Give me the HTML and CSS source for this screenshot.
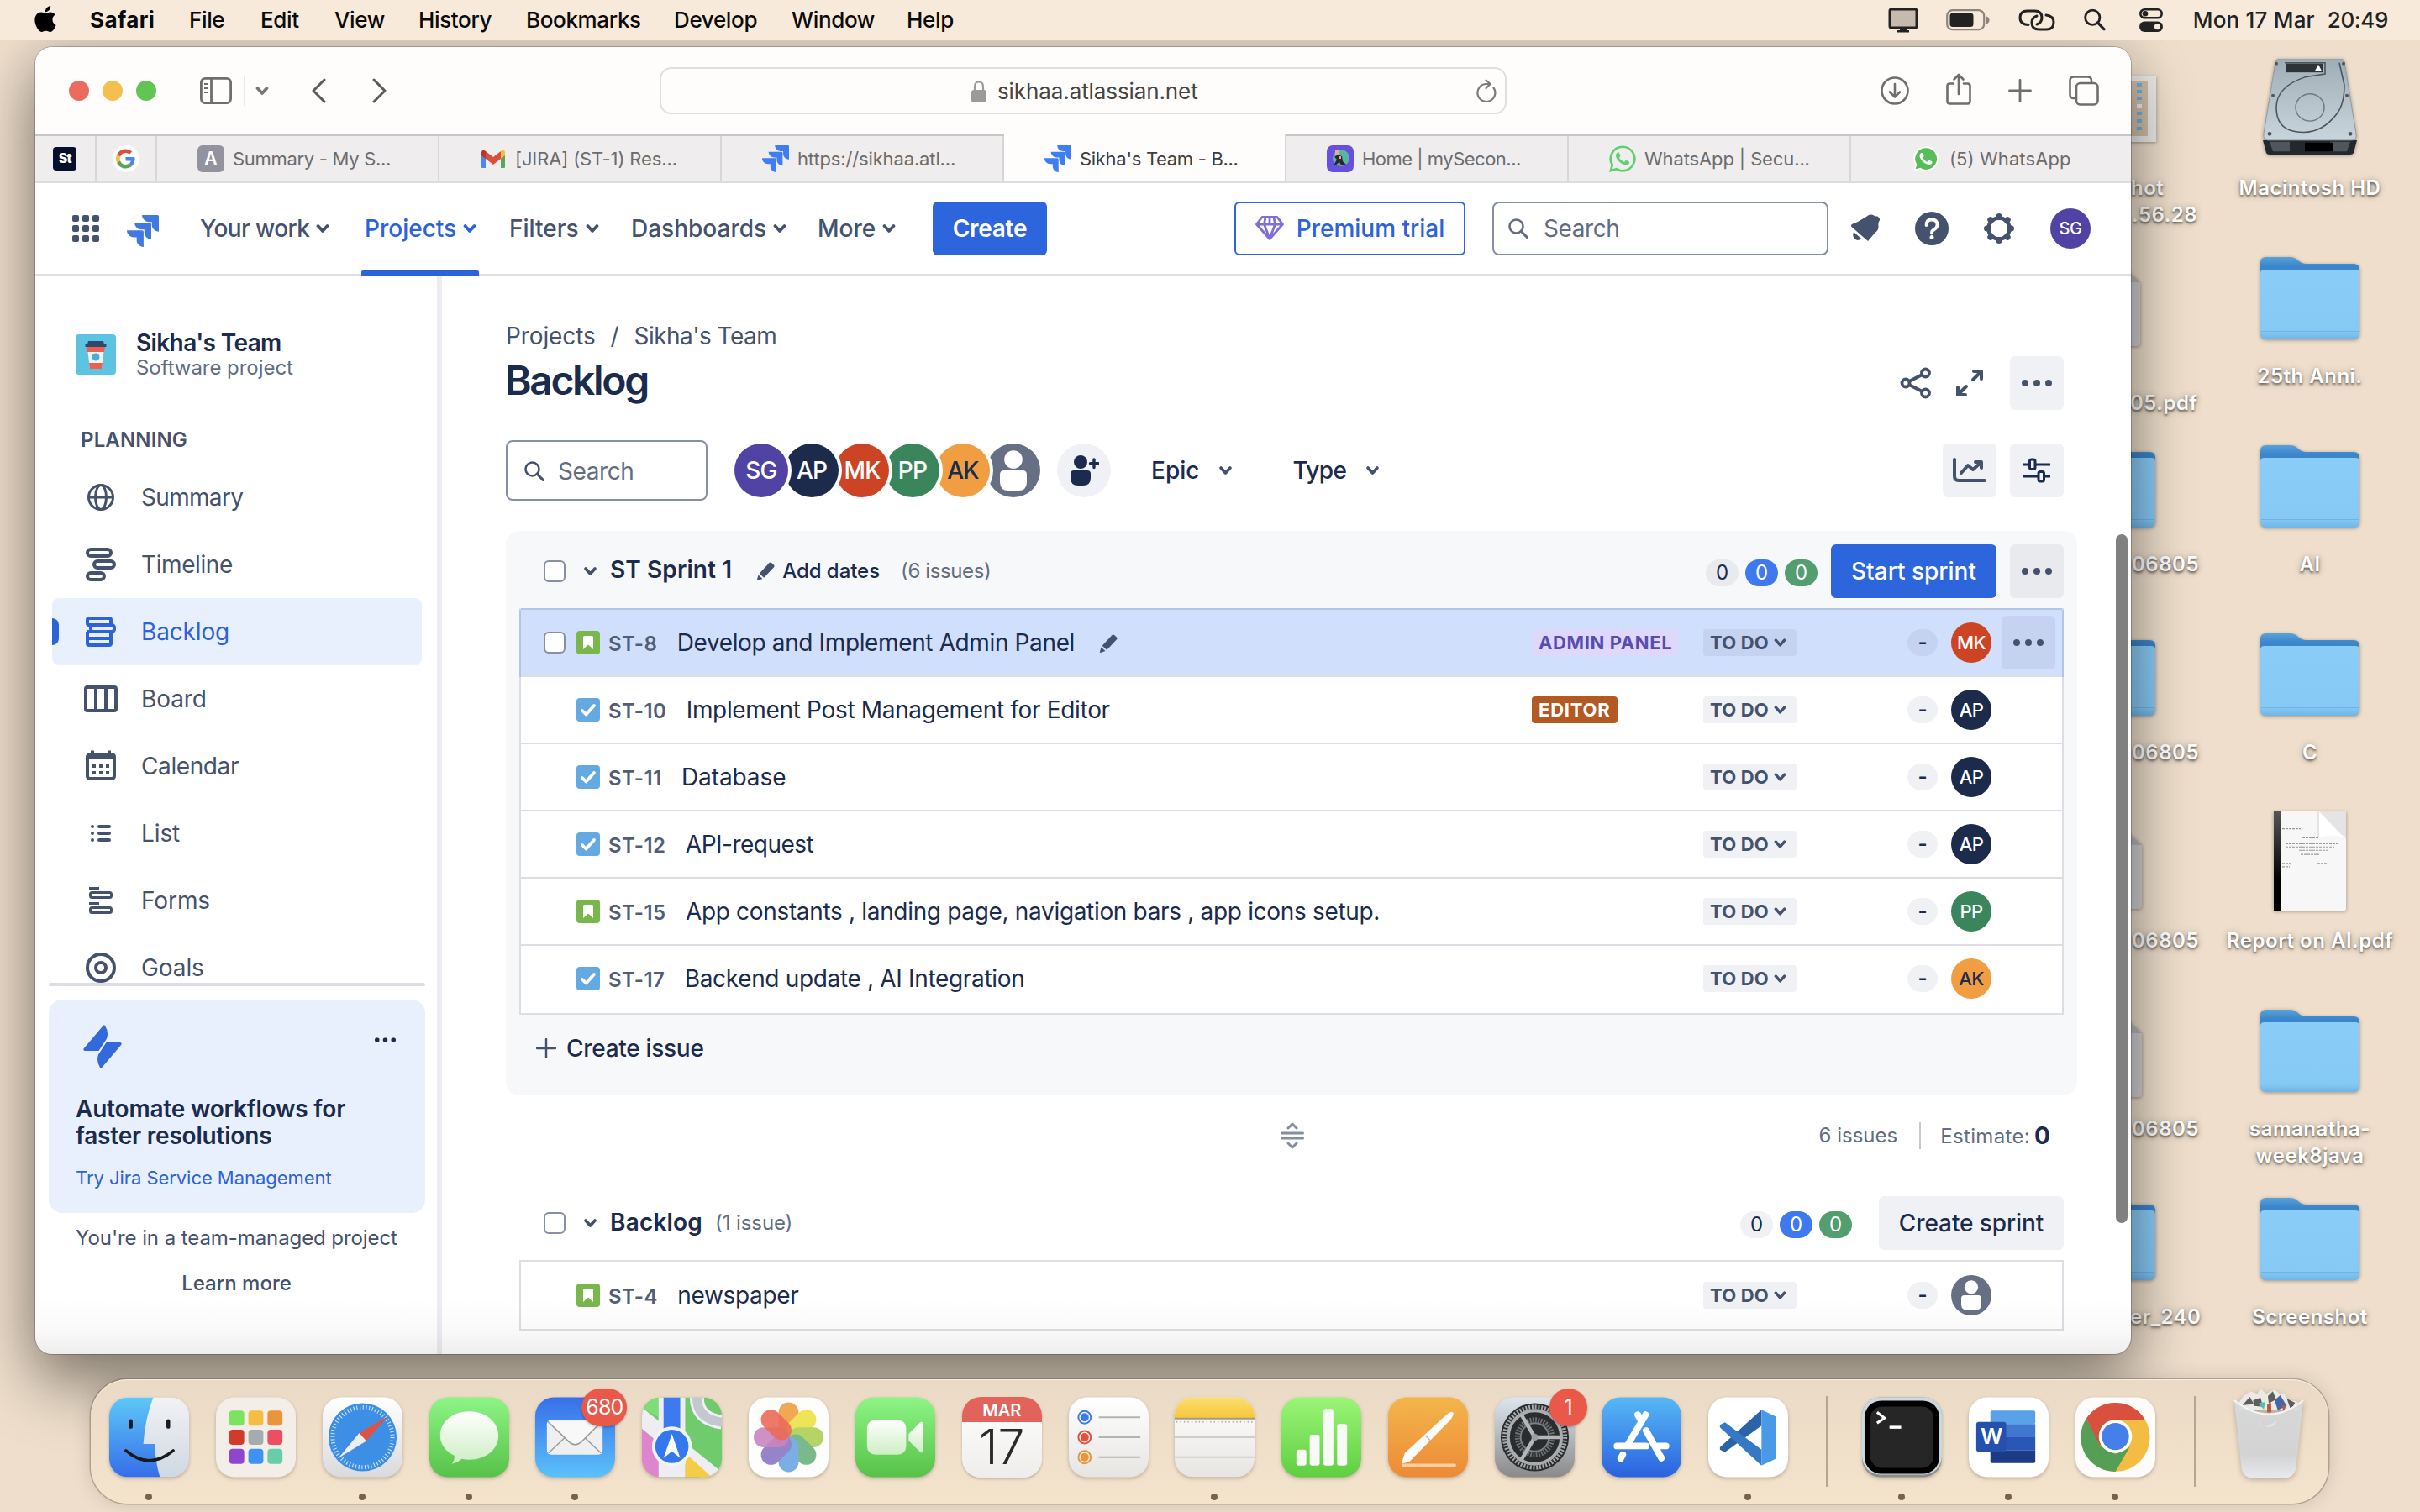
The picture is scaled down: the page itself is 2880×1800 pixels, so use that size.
FILE: index.html
```html
<!DOCTYPE html>
<html lang="en">
<head>
<meta charset="utf-8">
<title>Sikha's Team - Backlog</title>
<link rel="stylesheet" href="styles.css">
</head>
<body>
<svg class="defs" width="0" height="0" aria-hidden="true">
  <defs>
    <linearGradient id="gBlue" x1="0" y1="0" x2="0" y2="1"><stop offset="0" stop-color="#57b8f5"/><stop offset="1" stop-color="#2a62de"/></linearGradient>
    <linearGradient id="gFinder" x1="0" y1="0" x2="0" y2="1"><stop offset="0" stop-color="#5ec8f8"/><stop offset="1" stop-color="#356ee9"/></linearGradient>
    <linearGradient id="gFinderR" x1="0" y1="0" x2="0" y2="1"><stop offset="0" stop-color="#f1f2f5"/><stop offset="1" stop-color="#cfd8e3"/></linearGradient>
    <linearGradient id="gGreen" x1="0" y1="0" x2="0" y2="1"><stop offset="0" stop-color="#8df585"/><stop offset="1" stop-color="#57c148"/></linearGradient>
    <linearGradient id="gNum" x1="0" y1="0" x2="0" y2="1"><stop offset="0" stop-color="#9bf577"/><stop offset="1" stop-color="#5fcf41"/></linearGradient>
    <linearGradient id="gMail" x1="0" y1="0" x2="0" y2="1"><stop offset="0" stop-color="#3670ea"/><stop offset="1" stop-color="#5bc1f9"/></linearGradient>
    <linearGradient id="gOrange" x1="0" y1="0" x2="0" y2="1"><stop offset="0" stop-color="#f3b64b"/><stop offset="1" stop-color="#ed8a37"/></linearGradient>
    <linearGradient id="gGrey" x1="0" y1="0" x2="0" y2="1"><stop offset="0" stop-color="#dbe6ee"/><stop offset="1" stop-color="#8b8a8a"/></linearGradient>
    <linearGradient id="gWhite" x1="0" y1="0" x2="0" y2="1"><stop offset="0" stop-color="#ffffff"/><stop offset="1" stop-color="#d9dadb"/></linearGradient>
    <linearGradient id="gPaper" x1="0" y1="0" x2="0" y2="1"><stop offset="0" stop-color="#ffffff"/><stop offset="1" stop-color="#e6e5e2"/></linearGradient>
    <linearGradient id="gBubble" x1="0" y1="0" x2="0" y2="1"><stop offset="0" stop-color="#ffffff"/><stop offset="1" stop-color="#cdeec4"/></linearGradient>
    <linearGradient id="gYellow" x1="0" y1="0" x2="0" y2="1"><stop offset="0" stop-color="#fbdf6e"/><stop offset="1" stop-color="#f6c63c"/></linearGradient>
    <linearGradient id="gFolder" x1="0" y1="0" x2="0" y2="1"><stop offset="0" stop-color="#8acdf8"/><stop offset=".88" stop-color="#86c9f5"/><stop offset="1" stop-color="#6fb5e6"/></linearGradient>
    <linearGradient id="gFolderBack" x1="0" y1="0" x2="0" y2="1"><stop offset="0" stop-color="#59a3d8"/><stop offset=".2" stop-color="#3a85cc"/></linearGradient>
    <linearGradient id="gDisk" x1="0" y1="0" x2="0" y2="1"><stop offset="0" stop-color="#9fadb6"/><stop offset="1" stop-color="#c9d5dc"/></linearGradient>
    <linearGradient id="gTrash" x1="0" y1="0" x2="0" y2="1"><stop offset="0" stop-color="#d9dbdd"/><stop offset=".7" stop-color="#d4d5d7"/><stop offset="1" stop-color="#e9edf2"/></linearGradient>
    <linearGradient id="gSpine" x1="0" y1="0" x2="0" y2="1"><stop offset="0" stop-color="#555"/><stop offset=".7" stop-color="#000"/></linearGradient>
    <clipPath id="squircle"><rect width="96" height="96" rx="22"/></clipPath>

    <symbol id="jira" viewBox="2 2 20 20"><path d="M11.53 2c0 2.4 1.97 4.35 4.35 4.35h1.78v1.7c0 2.4 1.94 4.34 4.34 4.35V2.84a.84.84 0 00-.84-.84h-9.63zM6.77 6.8a4.362 4.362 0 004.34 4.34h1.8v1.72a4.362 4.362 0 004.34 4.34V7.63a.841.841 0 00-.83-.83H6.77zM2 11.6c0 2.4 1.95 4.34 4.35 4.34h1.78v1.72c.01 2.39 1.95 4.33 4.34 4.34v-9.57a.84.84 0 00-.84-.83H2z"/></symbol>
    <symbol id="chev" viewBox="0 0 16 12"><path d="M2.5 3l5.5 6 5.5-6" fill="none" stroke="currentColor" stroke-width="3.700" stroke-linecap="round" stroke-linejoin="round"/></symbol>
    <symbol id="search" viewBox="0 0 24 24"><circle cx="9.5" cy="9.5" r="8" fill="none" stroke="currentColor" stroke-width="2.6"/><path d="M15.2 15.2l7 7.2" stroke="currentColor" stroke-width="3" stroke-linecap="round"/></symbol>
    <symbol id="dots" viewBox="0 0 36 8"><circle cx="4" cy="4" r="4"/><circle cx="18" cy="4" r="4"/><circle cx="32" cy="4" r="4"/></symbol>
    <symbol id="pencil" viewBox="1 1 22 22"><path d="M4.200 14.800L15.800 2.2q1.300-1.300 2.800-.1l2.800 2.400q1.300 1.300.1 2.700L9.700 19.800z"/><path d="M3 16.600l5 4.500-5.800 1.800q-1 0-.8-1z"/></symbol>
    <symbol id="story" viewBox="0 0 28 28"><rect width="28" height="28" rx="4" fill="#79b64c"/><path d="M8 7.500q0-1.500 1.500-1.500h9q1.500 0 1.500 1.500V22l-6-5.500L8 22z" fill="#fff"/></symbol>
    <symbol id="task" viewBox="0 0 28 28"><rect width="28" height="28" rx="4" fill="#65a9e2"/><path d="M7 15l4.500 4.500L21 9" fill="none" stroke="#fff" stroke-width="3.800" stroke-linecap="round" stroke-linejoin="round"/></symbol>
    <symbol id="person" viewBox="0 0 64 64"><circle cx="32" cy="32" r="32" fill="#666f84"/><circle cx="32" cy="19" r="10.800" fill="#fff"/><path d="M16 37q0-5 5-5h22q5 0 5 5v9q0 10-10 10H26q-10 0-10-10z" fill="#fff"/></symbol>
    <symbol id="phone" viewBox="0 0 24 24"><path d="M17.472 14.382c-.297-.149-1.758-.867-2.03-.967-.273-.099-.471-.148-.67.15-.197.297-.767.966-.94 1.164-.173.199-.347.223-.644.075-.297-.15-1.255-.463-2.39-1.475-.883-.788-1.480-1.761-1.653-2.059-.173-.297-.018-.458.130-.606.134-.133.298-.347.446-.520.149-.174.198-.298.298-.497.099-.198.050-.371-.025-.520-.075-.149-.669-1.612-.916-2.207-.242-.579-.487-.500-.669-.510-.173-.008-.371-.010-.570-.010-.198 0-.520.074-.792.372-.272.297-1.040 1.016-1.040 2.479 0 1.462 1.065 2.875 1.213 3.074.149.198 2.096 3.200 5.077 4.487.709.306 1.262.489 1.694.625.712.227 1.360.195 1.871.118.571-.085 1.758-.719 2.006-1.413.248-.694.248-1.289.173-1.413-.074-.124-.272-.198-.570-.347"/></symbol>
    <symbol id="folder" viewBox="0 0 120 100">
      <path d="M1 8q0-7 7-7h28q6 0 10 4t10 4h56q7 0 7 7v40H1z" fill="url(#gFolderBack)"/>
      <path d="M1 20q0-4 5-4h108q5 0 5 4v72q0 7-7 7H8q-7 0-7-7z" fill="url(#gFolder)"/>
      <path d="M2 89.500h116" stroke="#6fb3e3" stroke-width="1"/>
    </symbol>
    <symbol id="doc" viewBox="0 0 84 96"><path d="M4 0h58l22 20v72q0 4-4 4H4q-4 0-4-4V4q0-4 4-4z" fill="#d2d1d1"/><path d="M62 0l22 20H62z" fill="#b9b8b8"/></symbol>
  </defs>
</svg>

<header class="menubar">
  <nav class="menus">
    <svg class="apple" viewBox="2 0 20 24"><path d="M12.152 6.896c-.948 0-2.415-1.078-3.960-1.040-2.040.027-3.910 1.183-4.961 3.014-2.117 3.675-.546 9.103 1.519 12.090 1.013 1.454 2.208 3.090 3.792 3.039 1.520-.065 2.090-.987 3.935-.987 1.831 0 2.350.987 3.960.948 1.637-.026 2.676-1.480 3.676-2.948 1.156-1.688 1.636-3.325 1.662-3.415-.039-.013-3.182-1.221-3.220-4.857-.026-3.040 2.480-4.494 2.597-4.559-1.429-2.090-3.623-2.324-4.390-2.376-2-.156-3.675 1.090-4.610 1.090zM15.530 3.830c.843-1.012 1.400-2.427 1.245-3.830-1.207.052-2.662.805-3.532 1.818-.780.896-1.454 2.338-1.273 3.714 1.338.104 2.715-.688 3.559-1.701"/></svg>
    <b>Safari</b><span>File</span><span>Edit</span><span>View</span><span>History</span><span>Bookmarks</span><span>Develop</span><span>Window</span><span>Help</span>
  </nav>
  <div class="status">
    <svg width="36" height="30" viewBox="0 0 36 30"><rect x="2" y="2" width="32" height="22" rx="2" fill="#c5baad" stroke="#222" stroke-width="3"/><path d="M14 24h8v3h3v2.500H11V27h3z" fill="#222"/></svg>
    <svg width="52" height="26" viewBox="0 0 52 26"><rect x="1.200" y="1.200" width="44" height="23" rx="6.500" fill="none" stroke="#8d857c" stroke-width="2.200"/><rect x="4.500" y="4.500" width="28" height="16.500" rx="3.500" fill="#222"/><path d="M48 8.500q3.500 1.500 3.500 4.500T48 17.500z" fill="#8d857c"/></svg>
    <svg width="44" height="26" viewBox="0 0 44 26" fill="none" stroke="#222" stroke-width="3" stroke-linecap="round"><path d="M12 18.500q-10-.5-10-8.500 0-8 8.500-8h9Q28 2 28 10q0 6-6 8"/><path d="M33 7q9 1 9 8.500 0 8.500-8.500 8.500h-9Q16 24 16 16q0-6 6-8"/></svg>
    <svg width="26" height="27" viewBox="0 0 24 24" color="#222"><use href="#search"/></svg>
    <svg width="28" height="28" viewBox="0 0 28 28"><rect x="1.300" y="1.300" width="25.400" height="10" rx="5" fill="none" stroke="#222" stroke-width="2.600"/><circle cx="7" cy="6.300" r="3.300" fill="#222"/><rect y="15.500" width="28" height="12.500" rx="6.200" fill="#222"/><circle cx="21.500" cy="21.700" r="3.600" fill="#f7eadb"/></svg>
    <span class="date">Mon 17 Mar</span><span class="time">20:49</span>
  </div>
</header>

<main class="desktop">
  <figure class="item" style="left:2593px;top:70px"><svg width="112" height="114" viewBox="0 0 112 120" preserveAspectRatio="none"><path d="M0 102l4 16q1 2 4 2h96q3 0 4-2l4-16z" fill="#23282c"/><path d="M8 104h24v12H12zM80 104h24l-4 12H80z" fill="#4f575c"/><path d="M15 4q1-4 5-4h72q4 0 5 4l14 90q1 8-5 8H6q-6 0-5-8z" fill="url(#gDisk)" stroke="#8e9ba3"/><path d="M26 5h48v14l-24 4q-34 12-34 38t22 30q30 6 50-22 9-12 9-36l-6-28" fill="none" stroke="#4c555b" stroke-width="1.600"/><rect x="28" y="6" width="44" height="11" fill="#2d3336"/><path d="M66 7l4 8h-8z" fill="#fff"/><circle cx="56" cy="61" r="17" fill="none" stroke="#6f7a81" stroke-width="1.500"/><g fill="#4d565c"><circle cx="16" cy="6" r="2"/><circle cx="96" cy="6" r="2"/><circle cx="12" cy="46" r="2"/><circle cx="100" cy="46" r="2"/><circle cx="8" cy="94" r="2.500"/><circle cx="104" cy="94" r="2.500"/></g><path d="M50 105h34v11H50z" fill="#000"/></svg><figcaption>Macintosh HD</figcaption></figure>
  <figure class="item" style="left:2593px;top:304px"><svg width="120" height="102"><use href="#folder"/></svg><figcaption>25th Anni.</figcaption></figure>
  <figure class="item" style="left:2593px;top:528px"><svg width="120" height="102"><use href="#folder"/></svg><figcaption>AI</figcaption></figure>
  <figure class="item" style="left:2593px;top:752px"><svg width="120" height="102"><use href="#folder"/></svg><figcaption>C</figcaption></figure>
  <figure class="item report" style="left:2593px;top:966px"><svg width="86" height="118" viewBox="0 0 86 120" preserveAspectRatio="none"><rect width="86" height="120" rx="2" fill="#f7f7f7"/><rect width="8" height="120" fill="url(#gSpine)"/><path d="M52 0h34v34q-4-12-34-2z" fill="#e4e4e4"/><path d="M54 0l30 32q-14-6-30 0z" fill="#fff"/><path d="M10 21h22M34 32h20M14 39h64M14 43h58M30 47h36M32 52h22M10 63h11M10 67h9M52 63h11" stroke="#999" stroke-width="1.200" stroke-dasharray="3 1"/></svg><figcaption>Report on AI.pdf</figcaption></figure>
  <figure class="item" style="left:2593px;top:1200px"><svg width="120" height="102"><use href="#folder"/></svg><figcaption>samanatha-<br>week8java</figcaption></figure>
  <figure class="item" style="left:2593px;top:1424px"><svg width="120" height="102"><use href="#folder"/></svg><figcaption>Screenshot</figcaption></figure>

  <figure class="edge" style="left:2446px;top:91px"><svg width="120" height="78" viewBox="0 0 120 78"><rect width="120" height="78" fill="#ecebea"/><rect x="4" y="5" width="106" height="66" fill="#d2bfa9"/><rect x="4" y="5" width="83" height="66" fill="#f2f2f2"/><path d="M97 8h6v4h-6zM97 16h6v4h-6zM97 24h6v4h-6zM97 42h6v4h-6zM97 51h6v4h-6zM97 60h6v4h-6z" fill="#6fb3df"/><path d="M97 33h6v5h-6z" fill="#eee"/></svg></figure>
  <span class="tag" style="left:2536px;top:208px">hot</span>
  <span class="tag" style="left:2537px;top:240px">.56.28</span>
  <figure class="edge" style="left:2463px;top:316px"><svg width="84" height="96"><use href="#doc"/></svg></figure>
  <span class="tag" style="left:2535px;top:464px">05.pdf</span>
  <figure class="edge" style="left:2446px;top:528px"><svg width="120" height="102"><use href="#folder"/></svg></figure>
  <span class="tag" style="left:2537px;top:656px">06805</span>
  <figure class="edge" style="left:2446px;top:752px"><svg width="120" height="102"><use href="#folder"/></svg></figure>
  <span class="tag" style="left:2537px;top:880px">06805</span>
  <figure class="edge" style="left:2465px;top:986px"><svg width="84" height="96"><use href="#doc"/></svg></figure>
  <span class="tag" style="left:2537px;top:1104px">06805</span>
  <figure class="edge" style="left:2465px;top:1210px"><svg width="84" height="96"><use href="#doc"/></svg></figure>
  <span class="tag" style="left:2537px;top:1328px">06805</span>
  <figure class="edge" style="left:2446px;top:1424px"><svg width="120" height="102"><use href="#folder"/></svg></figure>
  <span class="tag" style="left:2535px;top:1552px">er_240</span>

  <section class="window">
    <div class="chrome">
      <div class="lights"><i class="red"></i><i class="amber"></i><i class="green"></i></div>
      <svg class="c-side" width="38" height="32" viewBox="0 0 38 32" fill="none" stroke="#6f6e6c" stroke-width="2.800"><rect x="1.400" y="1.400" width="35.200" height="29.200" rx="5"/><path d="M13.500 1.400v29.200"/><path d="M5 8h5M5 13h5M5 18h5" stroke-width="2"/></svg>
      <i class="c-sep"></i>
      <svg class="c-chev" width="16" height="12" color="#777674"><use href="#chev"/></svg>
      <svg class="c-back" width="17" height="30" viewBox="0 0 17 30" fill="none" stroke="#5c5b59" stroke-width="3" stroke-linecap="round" stroke-linejoin="round"><path d="M15 2L2 15l13 13"/></svg>
      <svg class="c-fwd" width="17" height="30" viewBox="0 0 17 30" fill="none" stroke="#5c5b59" stroke-width="3" stroke-linecap="round" stroke-linejoin="round"><path d="M2 2l13 13L2 28"/></svg>
      <div class="url">
        <svg width="18" height="26" viewBox="0 0 18 26"><rect y="11" width="18" height="15" rx="3" fill="#9b9a99"/><path d="M4 12V7q0-5.500 5-5.500T14 7v5" fill="none" stroke="#9b9a99" stroke-width="2.200"/></svg>
        <span>sikhaa.atlassian.net</span>
        <svg class="reload" width="24" height="28" viewBox="0 0 24 28" fill="none" stroke="#7c7b7a" stroke-width="2.200" stroke-linecap="round"><path d="M20.500 10.500A10.500 10.500 0 1 1 12 6h4"/><path d="M11.500 1.500L16.500 6l-5 5"/></svg>
      </div>
      <div class="c-right">
        <svg width="34" height="34" viewBox="0 0 34 34" fill="none" stroke="#6f6e6c" stroke-width="2.600" stroke-linecap="round" stroke-linejoin="round"><circle cx="17" cy="17" r="15.500"/><path d="M17 9v15M11 18.500l6 6 6-6"/></svg>
        <svg width="30" height="38" viewBox="0 0 30 38" fill="none" stroke="#6f6e6c" stroke-width="2.600" stroke-linecap="round" stroke-linejoin="round"><path d="M9 12.500H4.500q-3 0-3 3v18q0 3 3 3h21q3 0 3-3v-18q0-3-3-3H21M15 25V2M9.500 7.500L15 2l5.500 5.500"/></svg>
        <svg width="28" height="28" viewBox="0 0 28 28" stroke="#6f6e6c" stroke-width="2.800" stroke-linecap="round"><path d="M14 1.500v25M1.500 14h25"/></svg>
        <svg width="36" height="36" viewBox="0 0 36 36" fill="none" stroke="#6f6e6c" stroke-width="2.600"><rect x="9" y="9" width="25.500" height="25.500" rx="4.500"/><path d="M9 27H6q-4.500 0-4.500-4.500V6Q1.500 1.500 6 1.500h16.500Q27 1.500 27 6v3"/></svg>
      </div>
    </div>

    <div class="tabs">
      <div class="tab pin"><span class="fav-st">St</span></div>
      <div class="tab pin"><span class="fav-g"><svg width="23" height="24" viewBox="0 0 48 48"><path fill="#d9503f" d="M24 9.500c3.540 0 6.710 1.220 9.210 3.600l6.850-6.850C35.900 2.380 30.470 0 24 0 14.620 0 6.510 5.380 2.560 13.220l7.980 6.190C12.430 13.720 17.740 9.500 24 9.500z"/><path fill="#4f86ec" d="M46.980 24.550c0-1.570-.150-3.090-.380-4.550H24v9.020h12.940c-.580 2.960-2.260 5.480-4.780 7.180l7.730 6c4.510-4.180 7.090-10.360 7.090-17.650z"/><path fill="#f3bf42" d="M10.530 28.590c-.480-1.450-.760-2.990-.760-4.590s.270-3.140.760-4.590l-7.980-6.190C.920 16.460 0 20.120 0 24c0 3.880.920 7.540 2.560 10.780l7.970-6.190z"/><path fill="#58a55c" d="M24 48c6.480 0 11.930-2.130 15.890-5.810l-7.730-6c-2.150 1.450-4.920 2.300-8.160 2.300-6.260 0-11.570-4.220-13.470-9.910l-7.980 6.190C6.510 42.620 14.620 48 24 48z"/></svg></span></div>
      <div class="tab"><span class="fav-a">A</span><span class="t1">Summary - My S...</span></div>
      <div class="tab"><svg class="fav" width="32" height="24" viewBox="0 0 32 24"><path d="M2 4v18q0 1 1 1h4V9z" fill="#4f86ec"/><path d="M30 4v18q0 1-1 1h-4V9z" fill="#58a55c"/><path d="M7 3v9L2 8V4q1-4 5-1z" fill="#b7362a"/><path d="M25 3v9l5-4V4q-1-4-5-1z" fill="#f3bf42"/><path d="M7 3l9 7 9-7v9l-9 7-9-7z" fill="#d9503f"/></svg><span class="t2">[JIRA] (ST-1) Res...</span></div>
      <div class="tab"><svg class="fav" width="32" height="32" fill="#3f7ef2"><use href="#jira"/></svg><span class="t3">https://sikhaa.atl...</span></div>
      <div class="tab active"><svg class="fav" width="32" height="32" fill="#3f7ef2"><use href="#jira"/></svg><span class="t1">Sikha's Team - B...</span></div>
      <div class="tab"><svg class="fav" width="32" height="32" viewBox="0 0 32 32"><rect width="32" height="32" rx="7" fill="#6750e0"/><circle cx="17" cy="15" r="10" fill="#57b5a0"/><path d="M5 9l4 5 4-3 5 2 1 6 5 5h-7l-2-4-5 4H8l4-7z" fill="#2b2536"/><path d="M10 6h5v5h-5zM14 13h3v3h-3z" fill="#f0a592"/></svg><span class="t4">Home | mySecon...</span></div>
      <div class="tab"><svg class="fav" width="32" height="32" viewBox="0 0 24 24" fill="#5fd070"><path d="M12 1.300A10.700 10.700 0 0 0 2.900 17.600L1.400 22.600l5.200-1.400A10.700 10.700 0 1 0 12 1.300z" fill="none" stroke="#5fd070" stroke-width="2"/><use href="#phone"/></svg><span class="t2">WhatsApp | Secu...</span></div>
      <div class="tab last"><svg class="fav" width="30" height="30" viewBox="0 0 24 24" fill="#fff"><path d="M12 1A11 11 0 0 0 2.600 17.600L1 23l5.600-1.500A11 11 0 1 0 12 1z" fill="#57bd56" stroke="#fff" stroke-width="1.500"/><use href="#phone"/></svg><span>(5) WhatsApp</span></div>
    </div>

    <div class="nav">
      <div class="nav-left">
        <svg width="32" height="32" viewBox="0 0 32 32" fill="#44526d"><rect width="8" height="8" rx="2"/><rect x="12" width="8" height="8" rx="2"/><rect x="24" width="8" height="8" rx="2"/><rect y="12" width="8" height="8" rx="2"/><rect x="12" y="12" width="8" height="8" rx="2"/><rect x="24" y="12" width="8" height="8" rx="2"/><rect y="24" width="8" height="8" rx="2"/><rect x="12" y="24" width="8" height="8" rx="2"/><rect x="24" y="24" width="8" height="8" rx="2"/></svg>
        <svg width="38" height="38" fill="#4279e0"><use href="#jira"/></svg>
        <a class="link"><span class="yw">Your work</span><svg width="16" height="12"><use href="#chev"/></svg></a>
        <a class="link on"><span>Projects</span><svg width="16" height="12"><use href="#chev"/></svg></a>
        <a class="link"><span>Filters</span><svg width="16" height="12"><use href="#chev"/></svg></a>
        <a class="link"><span>Dashboards</span><svg width="16" height="12"><use href="#chev"/></svg></a>
        <a class="link"><span>More</span><svg width="16" height="12"><use href="#chev"/></svg></a>
        <button class="primary create">Create</button>
      </div>
      <button class="premium"><svg width="34" height="29" viewBox="0 0 34 29" fill="none" stroke="#7f6fd6" stroke-width="2.800" stroke-linejoin="round"><path d="M8 1.500h18l6.500 8.500L17 27.500 1.500 10zM1.500 10h31M12 1.500L10.500 10 17 27l6.500-17L22 1.500M17 1.500V10"/></svg>Premium trial</button>
      <div class="field nav-search"><svg width="24" height="24"><use href="#search"/></svg>Search</div>
      <svg class="bell" width="36" height="34" viewBox="0 0 36 34" fill="#44526d"><path d="M33.500 3.500q2.500 2 1 4.500-1.500 2-1 6 .5 5-4 8l-8.500 10-19-16.500q-2-2 0-3.500 3-1.500 7-3L19 3q5-4 9-1.500 2 1.500 4 .8z"/><path d="M4 21l9 8q-4 3.500-7.500.5T4 21z"/></svg>
      <svg class="help" width="40" height="40" viewBox="0 0 40 40"><circle cx="20" cy="20" r="20" fill="#44526d"/><path d="M13.500 16q0-6.500 6.500-6.500t6.500 6q0 3.500-3.500 5.500t-3 4.500" fill="none" stroke="#fff" stroke-width="3.800" stroke-linecap="round"/><circle cx="20" cy="30.500" r="2.500" fill="#fff"/></svg>
      <svg class="gear" width="38" height="38" viewBox="0 0 38 38"><circle cx="19" cy="19" r="12.500" fill="none" stroke="#44526d" stroke-width="4.500"/><g stroke="#44526d" stroke-width="7" stroke-linecap="round"><path d="M19 4.500v1.500M19 32v1.500M4.500 19H6M32 19h1.500M8.800 8.800l1 1M28.200 28.200l1 1M8.800 29.200l1-1M28.200 9.800l1-1"/></g><circle cx="19" cy="19" r="10" fill="#fff"/></svg>
      <span class="avatar sg nav-av">SG</span>
    </div>

    <div class="body">
      <aside class="side">
        <div class="project">
          <svg width="48" height="48" viewBox="0 0 48 48"><rect width="48" height="48" rx="4" fill="#5cc3e0"/><path d="M14 17h20l-3 24H17z" fill="#f3f3f3"/><path d="M13 14h22l-1 7H14zM16 34h16l-1 7H17z" fill="#ec5e50"/><path d="M11.500 11h25v4h-25zM15 8h18l1 4H14z" fill="#2c4a6e"/><circle cx="24" cy="27" r="4.500" fill="#4aaed0"/></svg>
          <div><h2>Sikha's Team</h2><p>Software project</p></div>
        </div>
        <h3>PLANNING</h3>
        <ul class="menu">
          <li><svg viewBox="0 0 48 48"><g fill="none" stroke="currentColor" stroke-width="3"><circle cx="24" cy="24" r="14.500"/><ellipse cx="24" cy="24" rx="6.500" ry="14.500"/><path d="M9.500 24h29"/></g></svg><span class="sm">Summary</span></li>
          <li><svg viewBox="0 0 48 48"><g fill="none" stroke="currentColor" stroke-width="4"><rect x="8" y="6" width="28" height="8" rx="4"/><rect x="16" y="20" width="24" height="8" rx="4"/><rect x="8" y="34" width="20" height="8" rx="4"/></g></svg><span>Timeline</span></li>
          <li class="sel"><svg viewBox="0 0 48 48"><g fill="none" stroke="currentColor" stroke-width="4"><rect x="8" y="8" width="28" height="8" rx="2"/><rect x="12" y="16" width="28" height="8" rx="3"/><path d="M8 24v14q0 2 2 2h24q2 0 2-2V24M8 32h28M8 24h28"/></g></svg><span>Backlog</span></li>
          <li><svg viewBox="0 0 48 48"><g fill="none" stroke="currentColor" stroke-width="4"><rect x="6" y="10" width="36" height="28" rx="2"/><path d="M18 10v28M30 10v28"/></g></svg><span class="z">Board</span></li>
          <li><svg viewBox="0 0 48 48"><rect x="8" y="10" width="32" height="29" rx="3" fill="none" stroke="currentColor" stroke-width="4"/><path d="M8 9h32v7H8zM12 5.500h4V10h-4zM32 5.500h4V10h-4zM14 22h4v4h-4zM22 22h4v4h-4zM30 22h4v4h-4zM14 30h4v4h-4zM22 30h4v4h-4zM30 30h4v4h-4z" fill="currentColor"/></svg><span>Calendar</span></li>
          <li><svg viewBox="0 0 48 48"><path d="M14 16h0M14 24h0M14 32h0M22 16h12M22 24h12M22 32h12" stroke="currentColor" stroke-width="4" stroke-linecap="round"/></svg><span class="z">List</span></li>
          <li><svg viewBox="0 0 48 48"><g fill="none" stroke="currentColor" stroke-width="3"><path d="M10 9.500h12M10 27.500h12"/><rect x="11.500" y="14.500" width="25" height="6" rx="2"/><rect x="11.500" y="32.500" width="25" height="6" rx="2"/></g></svg><span class="z">Forms</span></li>
          <li><svg viewBox="0 0 48 48"><g fill="none" stroke="currentColor" stroke-width="4"><circle cx="24" cy="24" r="16"/><circle cx="24" cy="24" r="6"/></g></svg><span class="z">Goals</span></li>
        </ul>
        <div class="promo">
          <div class="promo-top">
            <svg class="bolt" width="46" height="52" viewBox="0 0 46 52" fill="#3469dc"><path d="M24 .8q1-1.300 1.800 0 5 7.500 2.200 15.700L18.500 31H2q-2.500-.500-1.300-2.700z"/><path d="M22 51.200q-1 1.300-1.800 0-5-7.500-2.200-15.700L27.500 21H44q2.500.500 1.300 2.700z"/></svg>
            <svg width="25" height="6" viewBox="0 0 36 8" fill="#1b2b4d"><use href="#dots"/></svg>
          </div>
          <h4>Automate workflows for<br>faster resolutions</h4>
          <a>Try Jira Service Management</a>
        </div>
        <p class="note">You're in a team-managed project</p>
        <p class="learn">Learn more</p>
      </aside>

      <div class="page">
        <div class="crumbs"><span>Projects</span><span>/</span><span class="c2">Sikha's Team</span></div>
        <div class="head">
          <h1>Backlog</h1>
          <svg class="share" width="38" height="38" viewBox="0 0 38 38" fill="none" stroke="#44526d" stroke-width="3.800"><circle cx="7" cy="19" r="4.500"/><circle cx="30.500" cy="7" r="4.500"/><circle cx="30.500" cy="31" r="4.500"/><path d="M11 17L26.500 9M11 21l15.500 8"/></svg>
          <svg class="expand" width="32" height="32" viewBox="0 0 32 32" fill="none" stroke="#44526d" stroke-width="4" stroke-linecap="round" stroke-linejoin="round"><path d="M21 2h9v9M29 3l-9 9M11 30H2v-9M3 29l9-9"/></svg>
          <button class="sq"><svg width="36" height="8" fill="#44526d"><use href="#dots"/></svg></button>
        </div>
        <div class="filters">
          <div class="field f-search"><svg width="24" height="24"><use href="#search"/></svg>Search</div>
          <div class="people">
            <span class="avatar sg">SG</span><span class="avatar ap">AP</span><span class="avatar mk">MK</span><span class="avatar pp">PP</span><span class="avatar ak">AK</span><span class="avatar un"><svg width="64" height="64"><use href="#person"/></svg></span>
          </div>
          <span class="addp"><svg width="36" height="38" viewBox="0 0 36 38" fill="#1b2b4d"><circle cx="14" cy="9" r="8"/><path d="M2 23q0-4 4-4h16q4 0 4 4v5q0 9-9 9h-6q-9 0-9-9z"/><path d="M30 6v9.500M25.500 10.700H35" stroke="#1b2b4d" stroke-width="3.400" stroke-linecap="round"/></svg></span>
          <span class="drop d1">Epic<svg width="17" height="12"><use href="#chev"/></svg></span>
          <span class="drop d2">Type<svg width="17" height="12"><use href="#chev"/></svg></span>
          <button class="sq first"><svg width="40" height="30" viewBox="0 0 40 30" fill="none" stroke="#44526d" stroke-width="4" stroke-linecap="round" stroke-linejoin="round"><path d="M2 2v20q0 5 5 5h31M10 18l8-9 6 5 9-8M27 5h7v7"/></svg></button>
          <button class="sq"><svg width="32" height="30" viewBox="0 0 32 30" fill="none" stroke="#1b2b4d" stroke-width="3"><path d="M0 8h7M15 8h17M0 22h17M25 22h7"/><rect x="7.500" y="2" width="6.500" height="11.500" rx="2"/><rect x="18" y="16.500" width="6.500" height="11.500" rx="2"/></svg></button>
        </div>

        <section class="sprint">
          <div class="bar">
            <i class="check"></i><svg class="tog" width="17" height="12"><use href="#chev"/></svg>
            <h5>ST Sprint 1</h5>
            <svg class="pen" width="23" height="22" fill="#44526d"><use href="#pencil"/></svg>
            <span class="dates">Add dates</span><span class="count">(6 issues)</span>
            <div class="totals"><i class="g">0</i><i class="b">0</i><i class="n">0</i></div>
            <button class="primary start">Start sprint</button>
            <button class="sq dark"><svg width="36" height="8" fill="#44526d"><use href="#dots"/></svg></button>
          </div>
          <div class="list">
            <div class="row hot"><i class="check"></i><svg width="28" height="28"><use href="#story"/></svg><p><b>ST-8</b><span class="dev">Develop and Implement Admin Panel</span><svg class="rpen" width="23" height="22" fill="#44526d"><use href="#pencil"/></svg></p><em class="admin">ADMIN PANEL</em><span class="todo">TO DO<svg width="15" height="12"><use href="#chev"/></svg></span><i class="est">-</i><span class="avatar mk">MK</span><button class="sq"><svg width="36" height="8" fill="#44526d"><use href="#dots"/></svg></button></div>
            <div class="row"><u></u><svg width="28" height="28"><use href="#task"/></svg><p><b>ST-10</b><span>Implement Post Management for Editor</span></p><em class="editor">EDITOR</em><span class="todo">TO DO<svg width="15" height="12"><use href="#chev"/></svg></span><i class="est">-</i><span class="avatar ap">AP</span></div>
            <div class="row"><u></u><svg width="28" height="28"><use href="#task"/></svg><p><b>ST-11</b><span class="db">Database</span></p><u></u><span class="todo">TO DO<svg width="15" height="12"><use href="#chev"/></svg></span><i class="est">-</i><span class="avatar ap">AP</span></div>
            <div class="row"><u></u><svg width="28" height="28"><use href="#task"/></svg><p><b>ST-12</b><span class="api">API-request</span></p><u></u><span class="todo">TO DO<svg width="15" height="12"><use href="#chev"/></svg></span><i class="est">-</i><span class="avatar ap">AP</span></div>
            <div class="row"><u></u><svg width="28" height="28"><use href="#story"/></svg><p><b>ST-15</b><span>App constants , landing page, navigation bars , app icons setup.</span></p><u></u><span class="todo">TO DO<svg width="15" height="12"><use href="#chev"/></svg></span><i class="est">-</i><span class="avatar pp">PP</span></div>
            <div class="row"><u></u><svg width="28" height="28"><use href="#task"/></svg><p><b>ST-17</b><span>Backend update , AI Integration</span></p><u></u><span class="todo">TO DO<svg width="15" height="12"><use href="#chev"/></svg></span><i class="est">-</i><span class="avatar ak">AK</span></div>
          </div>
          <div class="add"><svg width="24" height="24" viewBox="0 0 24 24" stroke="#44526d" stroke-width="2.400" stroke-linecap="round"><path d="M12 1v22M1 12h22"/></svg>Create issue</div>
        </section>

        <div class="between">
          <svg class="grip" width="28" height="32" viewBox="0 0 28 32" fill="none" stroke="#838da3" stroke-width="3" stroke-linecap="round" stroke-linejoin="round"><path d="M9 7l5-5 5 5M1.500 13h25M1.500 19h25M9 25l5 5 5-5"/></svg>
          <span class="sum">6 issues</span><i></i><span class="estimate">Estimate:</span><b>0</b>
        </div>

        <div class="bar low">
          <i class="check"></i><svg class="tog" width="17" height="12"><use href="#chev"/></svg>
          <h5>Backlog</h5><span class="count one">(1 issue)</span>
          <div class="totals"><i class="g">0</i><i class="b">0</i><i class="n">0</i></div>
          <button class="sq wide">Create sprint</button>
        </div>
        <div class="list lone">
          <div class="row"><u></u><svg width="28" height="28"><use href="#story"/></svg><p><b>ST-4</b><span>newspaper</span></p><u></u><span class="todo">TO DO<svg width="15" height="12"><use href="#chev"/></svg></span><i class="est">-</i><span class="avatar un"><svg width="48" height="48"><use href="#person"/></svg></span></div>
        </div>
      </div>
      <i class="scroll"></i>
    </div>
  </section>

  <section class="dock">
    <div class="app run"><svg viewBox="0 0 96 96"><g clip-path="url(#squircle)"><rect width="96" height="96" fill="url(#gFinderR)"/><path d="M0 0h53Q43 26 41 56h14q0 20 6 40H0z" fill="url(#gFinder)"/></g><path d="M26 28.500v7M71 28.500v7" stroke="#1a1a1a" stroke-width="4.500" stroke-linecap="round"/><path d="M20 64q28 24 57 0" fill="none" stroke="#1a1a1a" stroke-width="3.500" stroke-linecap="round"/></svg></div>
    <div class="app"><svg viewBox="0 0 96 96"><rect width="96" height="96" rx="22" fill="#f3eee7"/><g><rect x="16" y="16" width="18" height="18" rx="4" fill="#7be360"/><rect x="39" y="16" width="18" height="18" rx="4" fill="#f4be43"/><rect x="62" y="16" width="18" height="18" rx="4" fill="#eb953a"/><rect x="16" y="39" width="18" height="18" rx="4" fill="#d03b2c"/><rect x="39" y="39" width="18" height="18" rx="4" fill="#a5abae"/><rect x="62" y="39" width="18" height="18" rx="4" fill="#ec4f63"/><rect x="16" y="62" width="18" height="18" rx="4" fill="#9045cf"/><rect x="39" y="62" width="18" height="18" rx="4" fill="#3d92f4"/><rect x="62" y="62" width="18" height="18" rx="4" fill="#68cda8"/></g></svg></div>
    <div class="app run"><svg viewBox="0 0 96 96"><rect width="96" height="96" rx="22" fill="url(#gWhite)"/><circle cx="48" cy="48" r="41" fill="#3d8fe6"/><circle cx="48" cy="48" r="36" fill="none" stroke="#cfe4fb" stroke-width="5" stroke-dasharray="1.100 2.670"/><path d="M78 23L52.500 52.500 44 43z" fill="#e2503f"/><path d="M19 73l25-30 8.500 9.500z" fill="#eceef0"/></svg></div>
    <div class="app run"><svg viewBox="0 0 96 96"><rect width="96" height="96" rx="22" fill="url(#gGreen)"/><path d="M48 17c20 0 35 12.500 35 29S68 75 48 75q-5 0-9-1-4 4-12 6 4-5 3-10C19 65 13 56 13 46c0-16.500 15-29 35-29z" fill="url(#gBubble)"/></svg></div>
    <div class="app run"><svg viewBox="0 0 96 96"><rect width="96" height="96" rx="22" fill="url(#gMail)"/><rect x="14" y="27" width="67" height="42" rx="5" fill="#efefef"/><path d="M16 67l19-18M79 67L60 49" stroke="#9a9a9a" stroke-width="1.500"/><path d="M15 29l26 25q7 6 14 0l25-25" fill="#f8f8f8" stroke="#9a9a9a" stroke-width="1.600"/></svg><span class="badge">680</span></div>
    <div class="app"><svg viewBox="0 0 96 96"><g clip-path="url(#squircle)"><rect width="96" height="96" fill="#6fcb6c"/><path d="M0 0h20v24L0 12z" fill="#7fdc79"/><path d="M0 12l96 78v6H70L0 38z" fill="#eeeef2"/><path d="M0 38l20 17v41H0z" fill="#dd86cf"/><path d="M52 67l32 29H52z" fill="#f5cc45"/><path d="M20 0h32v96H20z" fill="#eeeef2"/><path d="M26 0h20v40H26z" fill="#3d7af0"/><path d="M66 0q0 26 30 30" fill="none" stroke="#f1f1f5" stroke-width="17"/><path d="M66 0q0 26 30 30" fill="none" stroke="#c4c6d0" stroke-width="11"/></g><circle cx="36" cy="59" r="24" fill="#f2f3f7"/><circle cx="36" cy="59" r="20" fill="#3478ef"/><path d="M36 44l10 29-10-8-10 8z" fill="#fff"/></svg></div>
    <div class="app"><svg viewBox="0 0 96 96"><rect width="96" height="96" rx="22" fill="#fdfdfc"/><g opacity=".85"><rect x="36" y="6" width="24" height="42" rx="12" fill="#f09a37"/><rect x="36" y="6" width="24" height="42" rx="12" fill="#ece03c" transform="rotate(45 48 48)"/><rect x="36" y="6" width="24" height="42" rx="12" fill="#a9cd4b" transform="rotate(90 48 48)"/><rect x="36" y="6" width="24" height="42" rx="12" fill="#62ae79" transform="rotate(135 48 48)"/><rect x="36" y="6" width="24" height="42" rx="12" fill="#62a2e0" transform="rotate(180 48 48)"/><rect x="36" y="6" width="24" height="42" rx="12" fill="#8470c0" transform="rotate(225 48 48)"/><rect x="36" y="6" width="24" height="42" rx="12" fill="#c070b4" opacity=".9" transform="rotate(270 48 48)"/><rect x="36" y="6" width="24" height="42" rx="12" fill="#e8513c" opacity=".9" transform="rotate(315 48 48)"/></g></svg></div>
    <div class="app"><svg viewBox="0 0 96 96"><rect width="96" height="96" rx="22" fill="url(#gGreen)"/><rect x="14" y="27" width="47" height="42" rx="10" fill="url(#gBubble)"/><path d="M64 44l14-14q3-2 3 2v32q0 4-3 2L64 52z" fill="url(#gBubble)"/></svg></div>
    <div class="app"><div class="cal"><span>MAR</span><b>17</b></div></div>
    <div class="app"><svg viewBox="0 0 96 96"><rect width="96" height="96" rx="22" fill="url(#gPaper)"/><g fill="none" stroke-width="2"><circle cx="19" cy="24" r="7.500" stroke="#3d7bea"/><circle cx="19" cy="48" r="7.500" stroke="#e2503f"/><circle cx="19" cy="72" r="7.500" stroke="#e7963b"/></g><circle cx="19" cy="24" r="5" fill="#3d7bea"/><circle cx="19" cy="48" r="5" fill="#e2503f"/><circle cx="19" cy="72" r="5" fill="#e7963b"/><path d="M36 24h50M36 48h50M36 72h50" stroke="#b2b3b5" stroke-width="2"/></svg></div>
    <div class="app run"><svg viewBox="0 0 96 96"><g clip-path="url(#squircle)"><rect width="96" height="96" fill="url(#gPaper)"/><rect width="96" height="25" fill="url(#gYellow)"/><path d="M0 25.500h96" stroke="#a49a85" stroke-width="2"/><path d="M2 29.500h94" stroke="#b9b7b2" stroke-width="2" stroke-dasharray="1.500 3"/><path d="M0 48h96M0 72h96" stroke="#cfcecb" stroke-width="1.800"/></g></svg></div>
    <div class="app"><svg viewBox="0 0 96 96"><rect width="96" height="96" rx="22" fill="url(#gNum)"/><g fill="#f7faf5"><rect x="18" y="63" width="12" height="19" rx="2.500"/><rect x="34" y="45" width="12" height="37" rx="2.500"/><rect x="50.500" y="14" width="12" height="68" rx="2.500"/><rect x="67" y="32" width="12" height="50" rx="2.500"/></g></svg></div>
    <div class="app"><svg viewBox="0 0 96 96"><rect width="96" height="96" rx="22" fill="url(#gOrange)"/><path d="M18 81.500h62" stroke="#f9cf9d" stroke-width="3.500" stroke-linecap="round"/><path d="M16 80l4-13 50-46q6-5 8-3t-3 9L26 77z" fill="#fbfbfb"/><path d="M45 46l6 6" stroke="#b9b9b9" stroke-width="1.500"/></svg></div>
    <div class="app"><svg viewBox="0 0 96 96"><rect width="96" height="96" rx="22" fill="url(#gGrey)"/><circle cx="48" cy="48" r="41" fill="#2b2c2d"/><circle cx="48" cy="48" r="36.500" fill="none" stroke="#a4a8ab" stroke-width="5" stroke-dasharray="2 1.820"/><circle cx="48" cy="48" r="32" fill="none" stroke="#a9adb0" stroke-width="4"/><circle cx="48" cy="48" r="21" fill="none" stroke="#6e7275" stroke-width="6" stroke-dasharray="1.800 1.500"/><circle cx="48" cy="48" r="17" fill="none" stroke="#7d8184" stroke-width="2"/><path d="M48 48h31M48 48L32 21M48 48L32 75" stroke="#b3b7ba" stroke-width="4.500"/><circle cx="48" cy="48" r="4" fill="#9a9ea1"/></svg><span class="badge one">1</span></div>
    <div class="app"><svg viewBox="0 0 96 96"><rect width="96" height="96" rx="22" fill="url(#gBlue)"/><g stroke="#fff" stroke-linecap="round" stroke-width="8"><path d="M53 21L32 56M43.500 21l4 7M53.500 40L72 73M18.500 58.500h35M68 58.500h9.500M25.500 69L23 73.500"/></g></svg></div>
    <div class="app run"><svg viewBox="0 0 96 96"><rect width="96" height="96" rx="22" fill="#fff"/><path d="M64 15L14 60v3l6 3 44-32z" fill="#2a63a8"/><path d="M64 82L14 36v-3l6-3 44 33z" fill="#3478c6"/><path d="M64 15l17 8v51l-17 8z" fill="#4a99e6"/></svg></div>
    <i class="split"></i>
    <div class="app run"><svg viewBox="0 0 96 96"><rect width="96" height="96" rx="22" fill="#8b8c8d"/><rect width="96" height="93" rx="22" fill="#c9dbe0"/><rect x="3" y="4" width="90" height="88" rx="20" fill="#000"/><rect x="10" y="11" width="76" height="74" rx="14" fill="#262626"/><path d="M18 18l9 7-9 6" fill="none" stroke="#fff" stroke-width="3.200"/><path d="M33 36h14" stroke="#fff" stroke-width="3.500"/></svg></div>
    <div class="app run"><svg viewBox="0 0 96 96"><rect width="96" height="96" rx="22" fill="#fff"/><rect x="26" y="16" width="54" height="16" rx="2" fill="#5aa2e8"/><path d="M26 32h54v16H26z" fill="#4078cf"/><path d="M26 48h54v16H26z" fill="#2a56b8"/><path d="M26 64h54v13q0 2-2 2H28q-2 0-2-2z" fill="#1d3a86"/><rect x="9" y="29.500" width="36" height="36" rx="3" fill="#2650ae"/></svg><span class="w">W</span></div>
    <div class="app run"><svg viewBox="0 0 96 96"><rect width="96" height="96" rx="22" fill="#fdfcfa"/><circle cx="48" cy="48" r="41.500" fill="#f2bd42"/><path d="M13 25.500A41.500 41.500 0 0 1 84 27.500H48L29 59z" fill="#d9503f"/><path d="M13 25.500L30 58.500 48 68l17-8-17 29.500A41.500 41.500 0 0 1 13 25.500z" fill="#549f55"/><circle cx="48" cy="47" r="20" fill="#fff"/><circle cx="48" cy="47" r="16.300" fill="#457fea"/></svg></div>
    <i class="split s2"></i>
    <svg class="trash" width="86" height="112" viewBox="0 0 88 112"><path d="M7 18l6-9 9-6 8 3 4-6 7 6 10-5 6 5 6 1 4 6 12 3 2 10H8z" fill="#eceae6"/><path d="M12 20l9-10 5 9zM43 9l6-6 4 10-9 5zM66 12l10 5-5 9zM25 14l9-3 3 11-11-1z" fill="#5e5c5c"/><path d="M31 18l9-2-2 9z" fill="#4fc0b0"/><path d="M51 14l7-6 8 13-11 5z" fill="#4767a4"/><path d="M42 19l5-2v12h-5zM60 20l5 1-3 8z" fill="#bc5a3e"/><path d="M2 14q42 34 84 0l-9 84q-2 10-14 11H25q-12-1-14-11z" fill="url(#gTrash)" opacity=".93"/><path d="M2 14q42 34 84 0" fill="none" stroke="#f6f6f6" stroke-width="2"/><path d="M30 40q10 12 24-2-6 16-24 2z" fill="#e6e7e9"/></svg>
  </section>
</main>
</body>
</html>
```

FILE: styles.css
```css
* { box-sizing: border-box; margin: 0; padding: 0; }
body {
  position: relative; width: 2880px; height: 1800px; overflow: hidden;
  background: #eedecb; color: #1b2b4d;
  font: 400 28px/40px Inter, "Liberation Sans", sans-serif;
}
.defs { position: absolute; }
svg { display: block; flex: none; }
i, em { font-style: normal; }
u { text-decoration: none; }
ul { list-style: none; }
button { border: 0; background: none; font: inherit; color: inherit; display: flex; align-items: center; justify-content: center; flex: none; }
span, h1, h2, h3, h4, h5, b { white-space: nowrap; }

/* menu bar */
.menubar { position: relative; z-index: 3; height: 48px; background: #f7eadb; display: flex; justify-content: space-between; padding: 0 38px 0 41px; color: #0b0b0b; font-size: 26px; line-height: 47px; font-weight: 500; letter-spacing: -.35px; }
.menus { display: grid; grid-template-columns: 66px 118px 85px 88px 100px 128px 176px 140px 137px auto; }
.menus b { font-weight: 700; letter-spacing: .4px; }
.apple { width: 26px; height: 31px; margin-top: 7px; }
.status { display: flex; align-items: center; height: 47px; color: #222; }
.status svg:nth-child(2) { margin-left: 33px; }
.status svg:nth-child(3) { margin-left: 34px; }
.status svg:nth-child(4) { margin-left: 34px; }
.status svg:nth-child(5) { margin-left: 40px; }
.date { margin-left: 36px; letter-spacing: .2px; }
.time { margin-left: 15px; letter-spacing: -.4px; }

/* desktop */
.item { position: absolute; width: 312px; display: flex; flex-direction: column; align-items: center; }
.item svg, .edge svg { filter: drop-shadow(0 1px 2px rgba(0,0,0,.35)); }
.item figcaption, .tag { font-size: 24px; line-height: 32px; font-weight: 600; letter-spacing: .5px; color: #fff; text-shadow: 0 2px 3px rgba(0,0,0,.55), 0 1px 8px rgba(0,0,0,.3); text-align: center; }
.item figcaption { margin-top: 26px; }
.item:first-child figcaption { margin-top: 24px; }
.report figcaption { margin-top: 20px; }
.edge, .tag { position: absolute; }

/* browser window */
.window { position: absolute; left: 42px; top: 56px; width: 2494px; height: 1556px; border-radius: 20px; background: #fff; display: flex; flex-direction: column; box-shadow: 0 0 0 1px rgba(0,0,0,.2), 0 0 60px rgba(0,0,0,.14), 0 36px 76px 0 rgba(0,0,0,.42); }
.window::after { content: ""; position: absolute; inset: auto 0 0 0; height: 66px; border-radius: 0 0 20px 20px; background: linear-gradient(rgba(0,0,0,0), rgba(0,0,0,.025) 60%, rgba(0,0,0,.07)); }
.chrome { height: 104px; flex: none; background: #fefdfb; border-radius: 20px 20px 0 0; display: flex; align-items: center; padding: 0 38px 0 40px; }
.lights { display: flex; gap: 16px; }
.lights i { width: 24px; height: 24px; border-radius: 50%; }
.red { background: #ec6a5e; } .amber { background: #f4bf4f; } .green { background: #61c554; }
.c-side { margin-left: 52px; }
.c-sep { width: 2px; height: 36px; background: #ebe9e7; margin-left: 14px; }
.c-chev { margin-left: 12px; }
.c-back { margin-left: 51px; }
.c-fwd { margin-left: 55px; }
.url { position: relative; width: 1008px; height: 56px; margin-left: 325px; border: 2px solid #e1dfdd; border-radius: 14px; display: flex; align-items: center; gap: 13px; padding: 1px 0 0 369px; font-size: 26px; letter-spacing: -.1px; color: #454443; }
.reload { position: absolute; right: 10px; top: 12px; }
.c-right { margin-left: auto; display: flex; align-items: center; gap: 44px; }
.c-right svg:nth-child(2) { margin-top: -4px; }
.tabs { height: 58px; flex: none; display: flex; background: #efedee; border-top: 2px solid #c8c7c7; border-bottom: 2px solid #dddcdc; }
.tab { width: 336px; display: flex; align-items: center; padding-left: 48px; gap: 10px; border-right: 2px solid #d8d6d6; font-size: 22px; color: #6d6c6c; flex: none; }
.tab.pin { width: 72.500px; padding: 0; justify-content: center; }
.tab.active { background: #fefdfb; margin-top: -2px; padding-top: 2px; color: #3f3e3e; }
.tab.last { padding-left: 74px; border: 0; letter-spacing: .1px; gap: 13px; width: auto; }
.t1 { letter-spacing: -.3px; } .t2 { letter-spacing: -.12px; } .t3 { letter-spacing: -.14px; } .t4 { letter-spacing: -.5px; }
.fav-st { width: 28px; height: 28px; border-radius: 4px; background: #06102a; color: #fff; font: 800 16px/27px Inter, sans-serif; text-align: center; letter-spacing: -.8px; }
.fav-g { width: 32px; height: 32px; border-radius: 50%; background: #fff; display: flex; align-items: center; justify-content: center; }
.fav-a { width: 32px; height: 32px; border-radius: 6px; background: #93939f; color: #fff; font: 600 21px/32px Inter, sans-serif; text-align: center; }

/* product navigation */
.nav { height: 110px; flex: none; border-bottom: 2px solid #dddde3; display: flex; align-items: center; padding: 0 48px 1px 44px; color: #44526d; font-weight: 500; }
.nav-left { display: grid; grid-template-columns: 65px 87px 196px 172px 145px 222px 137px 136px; align-items: center; }
.nav-left > svg:nth-child(2) { margin-top: 6px; }
.link { display: flex; align-items: center; gap: 8px; }
.yw { letter-spacing: -.6px; }
.on { position: relative; color: #2c63da; }
.on::after { content: ""; position: absolute; left: -4px; bottom: -36px; width: 140px; height: 6px; background: #2c63da; border-radius: 2px 2px 0 0; }
.primary { background: #2c65dc; color: #fff; border-radius: 6px; height: 64px; }
.create { width: 136px; font-weight: 600; letter-spacing: -.3px; }
.premium { width: 275px; height: 64px; margin-left: auto; border: 2px solid #2c65dc; border-radius: 6px; color: #2c63da; gap: 15px; }
.field { border: 2px solid #8590a5; border-radius: 8px; display: flex; align-items: center; gap: 18px; background: #fff; color: #626d83; font-weight: 400; letter-spacing: -.4px; }
.nav-search { width: 400px; height: 64px; margin-left: 32px; padding-left: 17px; }
.bell { margin-left: 26px; }
.help { margin-left: 41px; }
.gear { margin-left: 41px; }
.avatar { display: flex; align-items: center; justify-content: center; border-radius: 50%; color: #fff; font-weight: 500; flex: none; }
.nav-av { width: 48px; height: 48px; margin-left: 42px; font-size: 20px; letter-spacing: -.5px; }
.sg { background: #5143a4; } .ap { background: #1c2b4c; } .mk { background: #cd4424; } .pp { background: #3b855c; } .ak { background: #f09e41; color: #1b2b4d; }

/* sidebar */
.body { flex: 1; display: flex; position: relative; min-height: 0; }
.side { width: 484px; border-right: 6px solid #ecedf1; padding-top: 66px; display: flex; flex-direction: column; flex: none; }
.project { display: flex; align-items: center; gap: 24px; padding-left: 48px; height: 58px; }
.project svg { margin-top: -2px; }
.project h2 { font-size: 28px; line-height: 29px; font-weight: 600; letter-spacing: -.62px; }
.project p { font-size: 24px; line-height: 29px; color: #626d83; letter-spacing: -.05px; }
.side h3 { margin: 56px 0 12px 54px; font-size: 24px; line-height: 32px; font-weight: 600; letter-spacing: .15px; color: #44526d; }
.menu { height: 618px; overflow: hidden; margin: 0 18px 0 20px; flex: none; color: #44526d; letter-spacing: -.4px; }
.menu li { height: 80px; display: flex; align-items: center; gap: 24px; padding-left: 34px; border-radius: 8px; position: relative; }
.menu svg { width: 48px; height: 48px; }
.sm { letter-spacing: -.68px; }
.menu .z { letter-spacing: -.1px; }
.menu .sel { background: #e9f0fd; color: #2c63da; letter-spacing: -.15px; }
.sel::before { content: ""; position: absolute; left: 0; top: 24px; width: 8px; height: 32px; border-radius: 0 8px 8px 0; background: #2c63da; }
.promo { margin: 20px 14px 0 16px; background: #e9f0fd; border-radius: 16px; height: 254px; position: relative; }
.promo::before { content: ""; position: absolute; left: 0; right: 0; top: -20px; height: 4px; border-radius: 2px; background: #dddde3; }
.promo-top { display: flex; justify-content: space-between; padding: 30px 35px 0 41px; height: 110px; }
.promo-top svg:last-child { margin-top: 15px; }
.promo h4 { margin: 4px 0 0 32px; font-size: 28px; line-height: 32px; font-weight: 600; letter-spacing: -.2px; }
.promo a { display: block; margin: 17px 0 0 32px; font-size: 22px; line-height: 34px; color: #2c63da; letter-spacing: -.05px; }
.note, .learn { text-align: center; color: #44526d; font-size: 24px; line-height: 32px; letter-spacing: -.08px; padding-left: 1px; }
.note { margin-top: 14px; }
.learn { margin-top: 22px; font-weight: 500; letter-spacing: 0; }

/* page */
.page { flex: 1; min-width: 0; padding: 52px 80px 0 76px; display: flex; flex-direction: column; }
.crumbs { display: flex; gap: 19px; color: #44526d; letter-spacing: -.12px; }
.crumbs .c2 { letter-spacing: -.55px; margin-left: -1px; }
.crumbs span:nth-child(2) { margin-left: -1px; }
.head { display: flex; align-items: center; height: 64px; margin-top: 4px; }
.head h1 { font-size: 48px; line-height: 57px; font-weight: 600; letter-spacing: -2.350px; align-self: flex-start; margin-right: auto; margin-left: -1px; }
.share { margin-right: 29px; } .expand { margin-right: 32px; }
.sq { width: 64px; height: 64px; border-radius: 6px; background: #f0f1f4; }
.filters { display: flex; align-items: center; height: 72px; margin-top: 36px; }
.f-search { width: 240px; height: 72px; padding-left: 20px; gap: 16px; padding-top: 1px; }
.f-search svg { color: #44526d; }
.people { display: flex; margin-left: 32px; }
.people .avatar { width: 64px; height: 64px; font-size: 28px; margin-right: -4px; letter-spacing: -.8px; position: relative; box-shadow: 0 0 0 4px #fff; }
.people .avatar:nth-child(1) { z-index: 6; } .people .avatar:nth-child(2) { z-index: 5; } .people .avatar:nth-child(3) { z-index: 4; }
.people .avatar:nth-child(4) { z-index: 3; } .people .avatar:nth-child(5) { z-index: 2; }
.addp { width: 64px; height: 64px; border-radius: 50%; background: #f0f1f4; display: flex; align-items: center; justify-content: center; margin-left: 24px; }
.drop { display: flex; align-items: center; font-weight: 500; }
.drop svg { color: #44526d; margin-left: 23px; }
.d1 { margin-left: 48px; } .d2 { margin-left: 71px; letter-spacing: -.6px; }
.first { margin-left: auto; margin-right: 16px; }

.sprint { margin: 36px -16px 0 0; height: 672px; background: #f7f8fa; border-radius: 16px; padding: 0 16px; flex: none; }
.bar { height: 92px; padding: 16px 0 12px 29px; display: flex; align-items: center; }
.check { width: 26px; height: 26px; border: 2px solid #8590a5; border-radius: 6px; background: #fff; flex: none; }
.tog { margin-left: 21px; color: #44526d; }
.bar h5 { margin-left: 15px; font-size: 28px; line-height: 34px; font-weight: 600; letter-spacing: .1px; margin-top: -4px; }
.pen { margin-left: 29px; }
.dates { margin-left: 8px; font-size: 24px; font-weight: 500; letter-spacing: -.05px; }
.count { margin-left: 25px; font-size: 24px; color: #626d83; letter-spacing: -.38px; }
.bar .one { margin-left: 15px; letter-spacing: -.1px; }
.totals { display: flex; gap: 8px; margin: 4px 16px 0 auto; }
.totals i { width: 39px; height: 32px; border-radius: 16px; font-size: 24px; line-height: 32px; text-align: center; color: #fff; }
.totals .g { background: #e9eaee; color: #1b2b4d; } .totals .b { background: #3f79f0; } .totals .n { background: #529e6f; }
.start { width: 197px; font-weight: 500; margin-right: 16px; }
.dark { background: #e9eaee; }
.list { border: 2px solid #dddee3; background: #fff; position: relative; }
.row { height: 80px; border-bottom: 2px solid #dddee3; display: grid; grid-template-columns: 39px 38px 1099px 204px 243px 52px 60px auto; align-items: center; padding-left: 27px; }
.row:last-child { border-bottom: 0; }
.list:not(.lone) .row:last-child { padding-bottom: 2px; }
.hot { background: #d0dffc; box-shadow: 0 -2px 0 #b3c4e4, -2px 0 0 #b3c4e4, 2px 0 0 #b3c4e4; }
.row p { display: flex; align-items: baseline; color: #1b2b4d; letter-spacing: -.33px; padding-top: 1px; }
.row p b { font-size: 24px; font-weight: 600; color: #505e78; letter-spacing: .4px; margin-right: 23.500px; }
.row p .dev { letter-spacing: -.37px; }
.row p .db { letter-spacing: -.1px; }
.row p .api { letter-spacing: -.5px; }
.rpen { margin-left: 29px; align-self: center; }
.row em { justify-self: start; height: 32px; padding: 0 8px; border-radius: 4px; font-size: 22px; line-height: 32px; font-weight: 700; }
.admin { background: #dfd8fd; color: #5b4bb0; letter-spacing: .62px; }
.editor { background: #b35921; color: #fff; letter-spacing: .8px; }
.todo { justify-self: start; width: 111px; height: 32px; border-radius: 4px; background: #f0f1f4; display: flex; align-items: center; gap: 6px; padding-left: 8px; font-size: 22px; line-height: 32px; font-weight: 700; color: #44526d; letter-spacing: .2px; }
.est { width: 36px; height: 32px; border-radius: 16px; background: #f0f1f4; font-size: 24px; line-height: 32px; text-align: center; color: #1b2b4d; font-weight: 600; }
.hot .todo, .hot .est, .hot .sq { background: #c5d3f0; }
.row .avatar { width: 48px; height: 48px; font-size: 22px; letter-spacing: -.7px; }
.add { height: 80px; display: flex; align-items: center; gap: 12px; padding-left: 20px; font-weight: 500; letter-spacing: -.3px; }
.between { height: 96px; flex: none; display: flex; align-items: center; justify-content: flex-end; padding-right: 16px; font-size: 24px; color: #626d83; }
.grip { margin-right: auto; margin-left: 922px; }
.between i { width: 2px; height: 32px; background: #c3c8d2; margin: 0 23px 0 26px; }
.between .estimate { letter-spacing: .35px; margin-top: 2px; }
.between b { font-size: 28px; color: #1b2b4d; font-weight: 700; margin-left: 5px; }
.low { height: 100px; padding: 24px 0 12px 45px; flex: none; }
.low .totals { margin-right: 32px; }
.low .totals .g { background: #f0f1f4; }
.low h5 { letter-spacing: .2px; margin-top: -2px; }
.wide { width: 220px; font-weight: 500; letter-spacing: -.1px; }
.lone { margin-left: 16px; }
.scroll { position: absolute; right: 4px; top: 308px; width: 14px; height: 820px; border-radius: 7px; background: #808080; }

/* dock */
.dock { position: absolute; left: 108px; top: 1642px; width: 2663px; height: 148px; border-radius: 44px; background: linear-gradient(#ead9c5, #f5e4cc); box-shadow: 0 0 0 1.500px rgba(90,75,60,.35), 0 0 24px rgba(0,0,0,.14), inset 0 1px 1px rgba(255,255,255,.6); display: flex; padding: 21px 0 0 22px; gap: 31.850px; }
.app { position: relative; width: 95px; height: 127px; flex: none; }
.app > svg { width: 95px; height: 96px; filter: drop-shadow(0 2px 2px rgba(0,0,0,.22)); }
.run::after { content: ""; position: absolute; left: 43px; bottom: 4px; width: 8px; height: 8px; border-radius: 50%; background: #75634f; }
.badge { position: absolute; right: -14px; top: -10px; width: 54px; height: 45px; border-radius: 23px; background: #e95848; color: #fff; font-size: 25px; line-height: 45px; text-align: center; letter-spacing: -.8px; box-shadow: 0 1px 3px rgba(0,0,0,.3); }
.badge.one { width: 45px; right: -15px; margin: 0; letter-spacing: 0; }
.cal { width: 95px; height: 96px; border-radius: 22px; overflow: hidden; background: linear-gradient(#fff, #eeedeb); text-align: center; display: flex; flex-direction: column; box-shadow: 0 2px 3px rgba(0,0,0,.22); }
.cal span { height: 30px; flex: none; background: #e1635a; color: #fff; font-size: 20px; font-weight: 600; line-height: 32px; }
.cal b { font-weight: 300; font-size: 57px; line-height: 60px; color: #2a2a2a; }
.w { position: absolute; left: 9px; top: 29px; width: 36px; text-align: center; font-size: 26px; line-height: 36px; font-weight: 600; color: #fff; }
.split { width: 2px; height: 108px; background: #b5a693; margin: -1px 10px 0 13px; flex: none; }
.s2 { margin: -1px 12px 0 14px; }
.trash { margin-top: -11px; filter: drop-shadow(0 2px 3px rgba(0,0,0,.25)); }
```
